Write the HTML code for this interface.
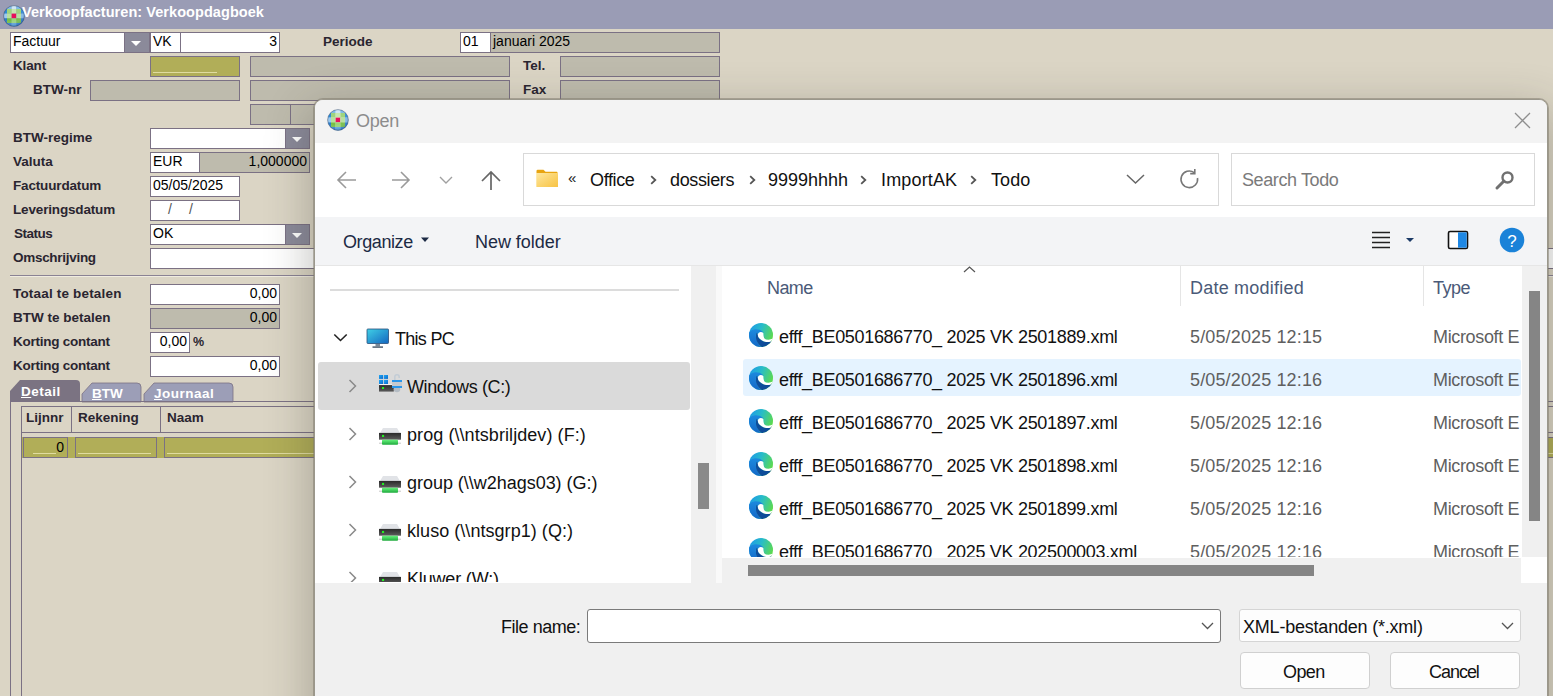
<!DOCTYPE html>
<html><head><meta charset="utf-8"><style>
*{margin:0;padding:0;box-sizing:border-box}
html,body{width:1553px;height:696px;overflow:hidden;background:#dbd5c5;font-family:"Liberation Sans",sans-serif}
.t{position:absolute;white-space:nowrap}
.b{position:absolute}
.fld{position:absolute;border:1px solid #7b7184;background:#fff}
.gr{background:#bebbad}
.ol{background:#b1ae58}
.ddb{position:absolute;background:#8b8a9a;border:1px solid #7b7184}
.ddb:after{content:"";position:absolute;left:6px;top:8px;border-left:5px solid transparent;border-right:5px solid transparent;border-top:5px solid #fff}
</style></head><body>
<div class="b" style="left:0px;top:0px;width:1553px;height:29px;background:#9a9cb5"></div>
<svg class="b" style="left:3px;top:5px" width="22" height="22" viewBox="0 0 22 22"><defs><clipPath id="cit"><circle cx="11" cy="11" r="10.4"/></clipPath><radialGradient id="rgt" cx="0.4" cy="0.3" r="0.75"><stop offset="0.55" stop-color="#fff" stop-opacity="0"/><stop offset="1" stop-color="#0a3a80" stop-opacity="0.45"/></radialGradient></defs><g clip-path="url(#cit)"><rect x="-0.75" y="-0.75" width="4.75" height="4.75" fill="#2a8ad8"/><rect x="3.95" y="-0.75" width="4.75" height="4.75" fill="#7fbcec"/><rect x="8.65" y="-0.75" width="4.75" height="4.75" fill="#cfe6f7"/><rect x="13.35" y="-0.75" width="4.75" height="4.75" fill="#7fbcec"/><rect x="18.05" y="-0.75" width="4.75" height="4.75" fill="#2a8ad8"/><rect x="-0.75" y="3.95" width="4.75" height="4.75" fill="#2a8ad8"/><rect x="3.95" y="3.95" width="4.75" height="4.75" fill="#9fd47e"/><rect x="8.65" y="3.95" width="4.75" height="4.75" fill="#c6e8b0"/><rect x="13.35" y="3.95" width="4.75" height="4.75" fill="#9fd47e"/><rect x="18.05" y="3.95" width="4.75" height="4.75" fill="#2a8ad8"/><rect x="-0.75" y="8.65" width="4.75" height="4.75" fill="#9ccaf0"/><rect x="3.95" y="8.65" width="4.75" height="4.75" fill="#b8e0a0"/><rect x="8.65" y="8.65" width="4.75" height="4.75" fill="#e8105a"/><rect x="13.35" y="8.65" width="4.75" height="4.75" fill="#b8e0a0"/><rect x="18.05" y="8.65" width="4.75" height="4.75" fill="#7fb8e8"/><rect x="-0.75" y="13.35" width="4.75" height="4.75" fill="#1f78cc"/><rect x="3.95" y="13.35" width="4.75" height="4.75" fill="#76c043"/><rect x="8.65" y="13.35" width="4.75" height="4.75" fill="#9ad47a"/><rect x="13.35" y="13.35" width="4.75" height="4.75" fill="#76c043"/><rect x="18.05" y="13.35" width="4.75" height="4.75" fill="#1f78cc"/><rect x="-0.75" y="18.05" width="4.75" height="4.75" fill="#1a62b8"/><rect x="3.95" y="18.05" width="4.75" height="4.75" fill="#2a80d0"/><rect x="8.65" y="18.05" width="4.75" height="4.75" fill="#5aa6e0"/><rect x="13.35" y="18.05" width="4.75" height="4.75" fill="#2a80d0"/><rect x="18.05" y="18.05" width="4.75" height="4.75" fill="#1a62b8"/><rect width="22" height="22" fill="url(#rgt)"/></g><circle cx="11" cy="11" r="10.4" fill="none" stroke="#2a3d5c" stroke-width="0.7" stroke-opacity="0.65"/></svg>
<div class="t" style="left:22px;top:2.98px;font-size:14.5px;line-height:18px;font-weight:bold;color:#fff;letter-spacing:0.06px">Verkoopfacturen: Verkoopdagboek</div>
<div class="fld " style="left:10px;top:32px;width:115px;height:21px"></div>
<div class="t" style="left:13px;top:32.15px;font-size:14px;line-height:18px;font-weight:normal;color:#000;">Factuur</div>
<div class="ddb" style="left:124px;top:32px;width:26px;height:21px"></div>
<div class="fld " style="left:150px;top:32px;width:31px;height:21px"></div>
<div class="t" style="left:153px;top:32.15px;font-size:14px;line-height:18px;font-weight:normal;color:#000;">VK</div>
<div class="fld " style="left:180px;top:32px;width:100px;height:21px"></div>
<div class="t" style="left:177px;width:100px;text-align:right;top:32.15px;font-size:14px;line-height:18px;font-weight:normal;color:#000;">3</div>
<div class="t" style="left:323px;top:32.82px;font-size:13.5px;line-height:17px;font-weight:bold;color:#2a2530;letter-spacing:0px">Periode</div>
<div class="fld " style="left:460px;top:32px;width:31px;height:21px"></div>
<div class="t" style="left:463px;top:32.15px;font-size:14px;line-height:18px;font-weight:normal;color:#000;">01</div>
<div class="fld gr" style="left:490px;top:32px;width:230px;height:21px"></div>
<div class="t" style="left:493px;top:32.15px;font-size:14px;line-height:18px;font-weight:normal;color:#000;">januari 2025</div>
<div class="t" style="left:13px;top:56.82px;font-size:13.5px;line-height:17px;font-weight:bold;color:#2a2530;letter-spacing:-0.15px">Klant</div>
<div class="fld ol" style="left:150px;top:56px;width:90px;height:21px"></div>
<div class="b" style="left:153px;top:72px;width:64px;height:1px;background:#e0dca0"></div>
<div class="fld gr" style="left:250px;top:56px;width:260px;height:21px"></div>
<div class="t" style="left:523px;top:56.82px;font-size:13.5px;line-height:17px;font-weight:bold;color:#2a2530;letter-spacing:0px">Tel.</div>
<div class="fld gr" style="left:560px;top:56px;width:160px;height:21px"></div>
<div class="t" style="left:33px;top:80.82px;font-size:13.5px;line-height:17px;font-weight:bold;color:#2a2530;letter-spacing:0px">BTW-nr</div>
<div class="fld gr" style="left:90px;top:80px;width:150px;height:21px"></div>
<div class="fld gr" style="left:250px;top:80px;width:260px;height:21px"></div>
<div class="t" style="left:523px;top:80.82px;font-size:13.5px;line-height:17px;font-weight:bold;color:#2a2530;letter-spacing:0px">Fax</div>
<div class="fld gr" style="left:560px;top:80px;width:160px;height:21px"></div>
<div class="fld gr" style="left:250px;top:104px;width:41px;height:21px"></div>
<div class="fld gr" style="left:290px;top:104px;width:120px;height:21px"></div>
<div class="t" style="left:13px;top:128.82px;font-size:13.5px;line-height:17px;font-weight:bold;color:#2a2530;letter-spacing:0px">BTW-regime</div>
<div class="fld " style="left:150px;top:128px;width:136px;height:21px"></div>
<div class="ddb" style="left:285px;top:128px;width:25px;height:21px"></div>
<div class="t" style="left:13px;top:152.82px;font-size:13.5px;line-height:17px;font-weight:bold;color:#2a2530;letter-spacing:0px">Valuta</div>
<div class="fld " style="left:150px;top:152px;width:50px;height:21px"></div>
<div class="t" style="left:153px;top:152.15px;font-size:14px;line-height:18px;font-weight:normal;color:#000;">EUR</div>
<div class="fld gr" style="left:199px;top:152px;width:111px;height:21px"></div>
<div class="t" style="left:196px;width:111px;text-align:right;top:152.15px;font-size:14px;line-height:18px;font-weight:normal;color:#000;">1,000000</div>
<div class="t" style="left:13px;top:176.82px;font-size:13.5px;line-height:17px;font-weight:bold;color:#2a2530;letter-spacing:-0.16px">Factuurdatum</div>
<div class="fld " style="left:150px;top:176px;width:90px;height:21px"></div>
<div class="t" style="left:153px;top:176.15px;font-size:14px;line-height:18px;font-weight:normal;color:#000;">05/05/2025</div>
<div class="t" style="left:13px;top:200.82px;font-size:13.5px;line-height:17px;font-weight:bold;color:#2a2530;letter-spacing:-0.16px">Leveringsdatum</div>
<div class="fld " style="left:150px;top:200px;width:90px;height:21px"></div>
<div class="t" style="left:168px;top:200.15px;font-size:14px;line-height:18px;font-weight:normal;color:#555;">/</div>
<div class="t" style="left:189px;top:200.15px;font-size:14px;line-height:18px;font-weight:normal;color:#555;">/</div>
<div class="t" style="left:14px;top:224.82px;font-size:13.5px;line-height:17px;font-weight:bold;color:#2a2530;letter-spacing:-0.5px">Status</div>
<div class="fld " style="left:150px;top:224px;width:136px;height:21px"></div>
<div class="t" style="left:153px;top:224.15px;font-size:14px;line-height:18px;font-weight:normal;color:#000;">OK</div>
<div class="ddb" style="left:285px;top:224px;width:25px;height:21px"></div>
<div class="t" style="left:13px;top:248.82px;font-size:13.5px;line-height:17px;font-weight:bold;color:#2a2530;letter-spacing:-0.29px">Omschrijving</div>
<div class="fld " style="left:150px;top:248px;width:1500px;height:21px"></div>
<div class="b" style="left:10px;top:275px;width:1600px;height:2px;background:#8a8294;border-bottom:1px solid #f0ece0"></div>
<div class="t" style="left:13px;top:284.82px;font-size:13.5px;line-height:17px;font-weight:bold;color:#2a2530;letter-spacing:0.18px">Totaal te betalen</div>
<div class="fld " style="left:150px;top:284px;width:130px;height:21px"></div>
<div class="t" style="left:147px;width:130px;text-align:right;top:284.15px;font-size:14px;line-height:18px;font-weight:normal;color:#000;">0,00</div>
<div class="t" style="left:13px;top:308.82px;font-size:13.5px;line-height:17px;font-weight:bold;color:#2a2530;letter-spacing:0px">BTW te betalen</div>
<div class="fld gr" style="left:150px;top:308px;width:130px;height:21px"></div>
<div class="t" style="left:147px;width:130px;text-align:right;top:308.15px;font-size:14px;line-height:18px;font-weight:normal;color:#000;">0,00</div>
<div class="t" style="left:13px;top:332.82px;font-size:13.5px;line-height:17px;font-weight:bold;color:#2a2530;letter-spacing:-0.25px">Korting contant</div>
<div class="fld " style="left:150px;top:332px;width:40px;height:21px"></div>
<div class="t" style="left:147px;width:40px;text-align:right;top:332.15px;font-size:14px;line-height:18px;font-weight:normal;color:#000;">0,00</div>
<div class="t" style="left:193px;top:333.67px;font-size:12.5px;line-height:16px;font-weight:bold;color:#2a2530;">%</div>
<div class="t" style="left:13px;top:356.82px;font-size:13.5px;line-height:17px;font-weight:bold;color:#2a2530;letter-spacing:-0.25px">Korting contant</div>
<div class="fld " style="left:150px;top:356px;width:130px;height:21px"></div>
<div class="t" style="left:147px;width:130px;text-align:right;top:356.15px;font-size:14px;line-height:18px;font-weight:normal;color:#000;">0,00</div>
<svg class="b" style="left:0;top:376px" width="320" height="30"><path d="M10 25 L10 15 L20 4 L76 4 Q80 4 80 8 L80 25 Z" fill="#7b7382"/><path d="M82 26 L82 18 L92 7 L137 7 Q141 7 141 11 L141 26 Z" fill="#9c9eb7" stroke="#7b7184" stroke-width="0.8"/><path d="M144 26 L144 18 L154 7 L229 7 Q233 7 233 11 L233 26 Z" fill="#9c9eb7" stroke="#7b7184" stroke-width="0.8"/></svg>
<div class="t" style="left:21px;top:382.82px;font-size:13.5px;line-height:17px;font-weight:bold;color:#fff;letter-spacing:0.5px"><u>D</u>etail</div>
<div class="t" style="left:92px;top:384.82px;font-size:13.5px;line-height:17px;font-weight:bold;color:#fff;"><u>B</u>TW</div>
<div class="t" style="left:154px;top:384.82px;font-size:13.5px;line-height:17px;font-weight:bold;color:#fff;letter-spacing:0.5px"><u>J</u>ournaal</div>
<div class="b" style="left:10px;top:401px;width:1600px;height:1px;background:#7b7184"></div>
<div class="b" style="left:10px;top:401px;width:1px;height:300px;background:#7b7184"></div>
<div class="b" style="left:21px;top:406px;width:1600px;height:1px;background:#7b7184"></div>
<div class="b" style="left:21px;top:406px;width:1px;height:300px;background:#7b7184"></div>
<div class="b" style="left:21px;top:432px;width:1600px;height:1px;background:#7b7184"></div>
<div class="b" style="left:71px;top:406px;width:1px;height:27px;background:#7b7184"></div>
<div class="b" style="left:160px;top:406px;width:1px;height:27px;background:#7b7184"></div>
<div class="t" style="left:26px;top:408.82px;font-size:13.5px;line-height:17px;font-weight:bold;color:#2a2530;">Lijnnr</div>
<div class="t" style="left:78px;top:408.82px;font-size:13.5px;line-height:17px;font-weight:bold;color:#2a2530;">Rekening</div>
<div class="t" style="left:167px;top:408.82px;font-size:13.5px;line-height:17px;font-weight:bold;color:#2a2530;">Naam</div>
<div class="b" style="left:22px;top:437px;width:1600px;height:21px;background:#b1ae58"></div>
<div class="fld ol" style="left:23px;top:437px;width:45px;height:21px"></div>
<div class="t" style="left:24px;width:40px;text-align:right;top:438.15px;font-size:14px;line-height:18px;font-weight:normal;color:#000;">0</div>
<div class="b" style="left:33px;top:453px;width:23px;height:1px;background:#e0dca0"></div>
<div class="fld ol" style="left:75px;top:437px;width:82px;height:21px"></div>
<div class="b" style="left:78px;top:453px;width:73px;height:1px;background:#e0dca0"></div>
<div class="fld ol" style="left:164px;top:437px;width:1500px;height:21px"></div>
<div class="b" style="left:167px;top:453px;width:1400px;height:1px;background:#e0dca0"></div>
<div class="b" style="left:314px;top:99px;width:1234px;height:640px;border:1px solid #9a978b;border-radius:9px 9px 0 0;background:#f0f0f0;box-shadow:0 0 0 1px rgba(125,120,105,0.5), 0 14px 46px 3px rgba(45,48,38,0.30);overflow:hidden"></div>
<div class="b" style="left:315px;top:100px;width:1232px;height:43px;background:#f3f3f3;border-radius:8px 8px 0 0"></div>
<svg class="b" style="left:327px;top:109px" width="22" height="22" viewBox="0 0 22 22"><defs><clipPath id="cid"><circle cx="11" cy="11" r="10.4"/></clipPath><radialGradient id="rgd" cx="0.4" cy="0.3" r="0.75"><stop offset="0.55" stop-color="#fff" stop-opacity="0"/><stop offset="1" stop-color="#0a3a80" stop-opacity="0.45"/></radialGradient></defs><g clip-path="url(#cid)"><rect x="-0.75" y="-0.75" width="4.75" height="4.75" fill="#2a8ad8"/><rect x="3.95" y="-0.75" width="4.75" height="4.75" fill="#7fbcec"/><rect x="8.65" y="-0.75" width="4.75" height="4.75" fill="#cfe6f7"/><rect x="13.35" y="-0.75" width="4.75" height="4.75" fill="#7fbcec"/><rect x="18.05" y="-0.75" width="4.75" height="4.75" fill="#2a8ad8"/><rect x="-0.75" y="3.95" width="4.75" height="4.75" fill="#2a8ad8"/><rect x="3.95" y="3.95" width="4.75" height="4.75" fill="#9fd47e"/><rect x="8.65" y="3.95" width="4.75" height="4.75" fill="#c6e8b0"/><rect x="13.35" y="3.95" width="4.75" height="4.75" fill="#9fd47e"/><rect x="18.05" y="3.95" width="4.75" height="4.75" fill="#2a8ad8"/><rect x="-0.75" y="8.65" width="4.75" height="4.75" fill="#9ccaf0"/><rect x="3.95" y="8.65" width="4.75" height="4.75" fill="#b8e0a0"/><rect x="8.65" y="8.65" width="4.75" height="4.75" fill="#e8105a"/><rect x="13.35" y="8.65" width="4.75" height="4.75" fill="#b8e0a0"/><rect x="18.05" y="8.65" width="4.75" height="4.75" fill="#7fb8e8"/><rect x="-0.75" y="13.35" width="4.75" height="4.75" fill="#1f78cc"/><rect x="3.95" y="13.35" width="4.75" height="4.75" fill="#76c043"/><rect x="8.65" y="13.35" width="4.75" height="4.75" fill="#9ad47a"/><rect x="13.35" y="13.35" width="4.75" height="4.75" fill="#76c043"/><rect x="18.05" y="13.35" width="4.75" height="4.75" fill="#1f78cc"/><rect x="-0.75" y="18.05" width="4.75" height="4.75" fill="#1a62b8"/><rect x="3.95" y="18.05" width="4.75" height="4.75" fill="#2a80d0"/><rect x="8.65" y="18.05" width="4.75" height="4.75" fill="#5aa6e0"/><rect x="13.35" y="18.05" width="4.75" height="4.75" fill="#2a80d0"/><rect x="18.05" y="18.05" width="4.75" height="4.75" fill="#1a62b8"/><rect width="22" height="22" fill="url(#rgd)"/></g><circle cx="11" cy="11" r="10.4" fill="none" stroke="#2a3d5c" stroke-width="0.7" stroke-opacity="0.65"/></svg>
<div class="t" style="left:356px;top:110.06px;font-size:18px;line-height:22px;font-weight:normal;color:#8c8c8c;;letter-spacing:-0.271px">Open</div>
<svg class="b" style="left:1510px;top:108px" width="25" height="25"><path d="M5 5 L20 20 M20 5 L5 20" stroke="#8e8e8e" stroke-width="1.25"/></svg>
<div class="b" style="left:315px;top:143px;width:1232px;height:74px;background:#fff"></div>
<svg class="b" style="left:330px;top:165px" width="180" height="32"><path d="M9 15 L26 15 M16 7 L8 15 L16 23" fill="none" stroke="#9a9a9a" stroke-width="1.6"/><path d="M62 15 L79 15 M71 7 L79 15 L71 23" fill="none" stroke="#9a9a9a" stroke-width="1.6"/><path d="M110 12 L116 18 L122 12" fill="none" stroke="#a0a0a0" stroke-width="1.4"/><path d="M161 25 L161 7 M152 16 L161 7 L170 16" fill="none" stroke="#666" stroke-width="1.7"/></svg>
<div class="b" style="left:523px;top:153px;width:696px;height:53px;border:1px solid #d9d9d9;background:#fff"></div>
<svg class="b" style="left:536px;top:169px" width="24" height="20"><path d="M0.5 2 Q0.5 0.8 1.7 0.8 L7.5 0.8 L9.5 2.8 L20.8 2.8 Q21.5 2.8 21.5 3.5 L21.5 4 L0.5 4 Z" fill="#e8a410"/><rect x="0.5" y="4" width="21.5" height="14" rx="0.6" fill="#fcd56a"/><rect x="0.5" y="4" width="21.5" height="14" fill="url(#fg)"/><defs><linearGradient id="fg" x1="0" y1="0" x2="1" y2="1"><stop offset="0" stop-color="#fff0b8" stop-opacity="0.7"/><stop offset="1" stop-color="#f5b82c" stop-opacity="0.6"/></linearGradient></defs></svg>
<div class="t" style="left:568px;top:168.30px;font-size:15px;line-height:19px;font-weight:normal;color:#222;">&#171;</div>
<div class="t" style="left:590px;top:168.76px;font-size:18px;line-height:22px;font-weight:normal;color:#111;;letter-spacing:-0.363px">Office</div>
<div class="t" style="left:670px;top:168.76px;font-size:18px;line-height:22px;font-weight:normal;color:#111;;letter-spacing:-0.372px">dossiers</div>
<div class="t" style="left:768px;top:168.76px;font-size:18px;line-height:22px;font-weight:normal;color:#111;;letter-spacing:-0.015px">9999hhhh</div>
<div class="t" style="left:881px;top:168.76px;font-size:18px;line-height:22px;font-weight:normal;color:#111;;letter-spacing:0.153px">ImportAK</div>
<div class="t" style="left:991px;top:168.76px;font-size:18px;line-height:22px;font-weight:normal;color:#111;;letter-spacing:0.094px">Todo</div>
<svg class="b" style="left:649px;top:173px" width="10" height="14"><path d="M2.2 3.2 L6.3 7 L2.2 10.8" fill="none" stroke="#555" stroke-width="1.8"/></svg>
<svg class="b" style="left:748px;top:173px" width="10" height="14"><path d="M2.2 3.2 L6.3 7 L2.2 10.8" fill="none" stroke="#555" stroke-width="1.8"/></svg>
<svg class="b" style="left:859px;top:173px" width="10" height="14"><path d="M2.2 3.2 L6.3 7 L2.2 10.8" fill="none" stroke="#555" stroke-width="1.8"/></svg>
<svg class="b" style="left:969px;top:173px" width="10" height="14"><path d="M2.2 3.2 L6.3 7 L2.2 10.8" fill="none" stroke="#555" stroke-width="1.8"/></svg>
<svg class="b" style="left:1124px;top:170px" width="24" height="18"><path d="M3 5 L11.5 13 L20 5" fill="none" stroke="#666" stroke-width="1.5"/></svg>
<svg class="b" style="left:1176px;top:166px" width="28" height="28"><path d="M21.5 12 A8.3 8.3 0 1 1 18.2 6.6" fill="none" stroke="#777" stroke-width="1.6"/><path d="M18.8 3 L18.8 7.6 L14.2 7.6" fill="none" stroke="#777" stroke-width="1.6"/></svg>
<div class="b" style="left:1231px;top:153px;width:304px;height:53px;border:1px solid #d9d9d9;background:#fff"></div>
<div class="t" style="left:1242px;top:168.76px;font-size:18px;line-height:22px;font-weight:normal;color:#7a7a7a;;letter-spacing:-0.392px">Search Todo</div>
<svg class="b" style="left:1492px;top:168px" width="26" height="26"><circle cx="15.5" cy="9.5" r="5" fill="none" stroke="#707070" stroke-width="2.4"/><path d="M12 13 L5 20" stroke="#707070" stroke-width="3" stroke-linecap="round"/></svg>
<div class="b" style="left:315px;top:217px;width:1232px;height:48px;background:#f3f4f6"></div>
<div class="b" style="left:315px;top:265px;width:1232px;height:1px;background:#e6e6e6"></div>
<div class="t" style="left:343px;top:230.76px;font-size:18px;line-height:22px;font-weight:normal;color:#1c2a44;;letter-spacing:-0.406px">Organize</div>
<svg class="b" style="left:420px;top:236px" width="12" height="8"><path d="M1 1.5 L9 1.5 L5 6 Z" fill="#1c2a44"/></svg>
<div class="t" style="left:475px;top:230.76px;font-size:18px;line-height:22px;font-weight:normal;color:#1c2a44;;letter-spacing:-0.042px">New folder</div>
<svg class="b" style="left:1368px;top:228px" width="60" height="26"><path d="M4 4.5 H22 M4 9.5 H22 M4 14.5 H22 M4 19.5 H22" stroke="#222" stroke-width="1.3"/><path d="M38 10 L46 10 L42 14 Z" fill="#1c3a66"/></svg>
<svg class="b" style="left:1446px;top:229px" width="24" height="22"><rect x="2.5" y="2.5" width="19" height="17" rx="1.5" fill="#fff" stroke="#111" stroke-width="1.6"/><rect x="12" y="3.3" width="8.7" height="15.4" fill="#1e88e5"/></svg>
<svg class="b" style="left:1499px;top:227px" width="26" height="26"><circle cx="13" cy="13" r="12.3" fill="#1a82d8"/><text x="13" y="19.5" text-anchor="middle" font-family="Liberation Sans" font-size="17" fill="#fff">?</text></svg>
<div class="b" style="left:315px;top:266px;width:376px;height:317px;background:#fff"></div>
<div class="b" style="left:691px;top:266px;width:25px;height:317px;background:#f0f0f0"></div>
<div class="b" style="left:716px;top:266px;width:6px;height:317px;background:#f9f9f9"></div>
<div class="b" style="left:722px;top:266px;width:800px;height:292px;background:#fff"></div>
<div class="b" style="left:1522px;top:266px;width:25px;height:292px;background:#f0f0f0"></div>
<div class="b" style="left:1521px;top:557px;width:26px;height:26px;background:#fff"></div>
<div class="b" style="left:722px;top:558px;width:799px;height:25px;background:#f0f0f0"></div>
<div class="b" style="left:748px;top:565px;width:566px;height:11px;background:#858585"></div>
<div class="b" style="left:1529px;top:291px;width:11px;height:230px;background:#858585"></div>
<div class="b" style="left:698px;top:463px;width:11px;height:46px;background:#8a8a8a"></div>
<div class="b" style="left:0;top:0;width:1553px;height:696px;clip-path:polygon(315px 266px,691px 266px,691px 582px,315px 582px)"><div class="b" style="left:330px;top:289px;width:349px;height:2px;background:#dcdcdc"></div>
<svg class="b" style="left:330px;top:330px" width="22" height="16"><path d="M4.3 4.5 L10.5 10.5 L16.7 4.5" fill="none" stroke="#222" stroke-width="1.6"/></svg>
<svg class="b" style="left:366px;top:328px" width="24" height="22"><defs><linearGradient id="mg" x1="0" y1="0" x2="1" y2="1"><stop offset="0" stop-color="#3fd0e6"/><stop offset="1" stop-color="#1466c0"/></linearGradient></defs><rect x="1" y="1" width="21.5" height="14.5" rx="0.8" fill="url(#mg)" stroke="#2a4f7a" stroke-width="0.8"/><rect x="9.5" y="16" width="4.5" height="2.5" fill="#7a8a9a"/><rect x="6.5" y="18.3" width="10.5" height="1.6" fill="#5a6a7a"/></svg>
<div class="t" style="left:395px;top:327.76px;font-size:18px;line-height:22px;font-weight:normal;color:#111;;letter-spacing:-0.715px">This PC</div>
<div class="b" style="left:318px;top:362px;width:372px;height:48px;background:#dadada;border-radius:3px"></div>
<svg class="b" style="left:344px;top:376px" width="16" height="20"><path d="M5.5 4 L11.5 10 L5.5 16" fill="none" stroke="#8a8a8a" stroke-width="1.5"/></svg>
<svg class="b" style="left:374px;top:370px" width="30" height="24" viewBox="0 0 30 24"><defs><linearGradient id="wg" x1="0" y1="0" x2="1" y2="1"><stop offset="0" stop-color="#22a8f4"/><stop offset="1" stop-color="#0868cc"/></linearGradient><linearGradient id="dg" x1="0" y1="0" x2="0" y2="1"><stop offset="0" stop-color="#2a2a2a"/><stop offset="1" stop-color="#5a5a5a"/></linearGradient></defs><rect x="5" y="5" width="4.1" height="3.9" fill="url(#wg)"/><rect x="9.9" y="5" width="4.1" height="3.9" fill="url(#wg)"/><rect x="5" y="9.9" width="4.1" height="4.1" fill="url(#wg)"/><rect x="9.9" y="9.9" width="4.1" height="4.1" fill="url(#wg)"/><rect x="5" y="14" width="14" height="1.2" fill="#f2f2f2"/><rect x="5" y="15.1" width="14.8" height="6.5" fill="url(#dg)"/><rect x="8" y="17" width="2.1" height="2" fill="#22ee22"/><path d="M20.8 10 L20.8 7 Q20.8 4.8 23 4.8 Q25.2 4.8 25.2 7 L25.2 8" fill="none" stroke="#c2ccd6" stroke-width="1.5"/><ellipse cx="23" cy="19.5" rx="3.2" ry="2.8" fill="#b4bcc4"/><rect x="18" y="10" width="10" height="8" fill="#c6cacf"/><rect x="18" y="10" width="10" height="2" fill="#2a96ea"/><rect x="18" y="16" width="10" height="2" fill="#2a96ea"/></svg>
<div class="t" style="left:407px;top:375.76px;font-size:18px;line-height:22px;font-weight:normal;color:#111;;letter-spacing:-0.382px">Windows (C:)</div>
<svg class="b" style="left:344px;top:424px" width="16" height="20"><path d="M5.5 4 L11.5 10 L5.5 16" fill="none" stroke="#8a8a8a" stroke-width="1.5"/></svg>
<svg class="b" style="left:379px;top:428px" width="22" height="17" viewBox="0 0 22 17"><defs><linearGradient id="dg1" x1="0" y1="0" x2="0" y2="1"><stop offset="0" stop-color="#2a2a2a"/><stop offset="1" stop-color="#5c5c5c"/></linearGradient><linearGradient id="gg1" x1="0" y1="0" x2="0" y2="1"><stop offset="0" stop-color="#66f27c"/><stop offset="1" stop-color="#1ea83c"/></linearGradient></defs><path d="M4 0 L18 0 L21 5 L1 5 Z" fill="#e1e3e7"/><rect x="0" y="4.9" width="22" height="6.8" fill="url(#dg1)"/><rect x="3" y="6.9" width="2.1" height="2.1" fill="#22ee22"/><rect x="0" y="14.6" width="22" height="1.3" fill="#d4d4d4"/><rect x="3" y="11.8" width="16" height="5" rx="0.8" fill="url(#gg1)"/></svg>
<div class="t" style="left:407px;top:423.76px;font-size:18px;line-height:22px;font-weight:normal;color:#111;;letter-spacing:0.073px">prog (\\ntsbriljdev) (F:)</div>
<svg class="b" style="left:344px;top:472px" width="16" height="20"><path d="M5.5 4 L11.5 10 L5.5 16" fill="none" stroke="#8a8a8a" stroke-width="1.5"/></svg>
<svg class="b" style="left:379px;top:476px" width="22" height="17" viewBox="0 0 22 17"><defs><linearGradient id="dg2" x1="0" y1="0" x2="0" y2="1"><stop offset="0" stop-color="#2a2a2a"/><stop offset="1" stop-color="#5c5c5c"/></linearGradient><linearGradient id="gg2" x1="0" y1="0" x2="0" y2="1"><stop offset="0" stop-color="#66f27c"/><stop offset="1" stop-color="#1ea83c"/></linearGradient></defs><path d="M4 0 L18 0 L21 5 L1 5 Z" fill="#e1e3e7"/><rect x="0" y="4.9" width="22" height="6.8" fill="url(#dg2)"/><rect x="3" y="6.9" width="2.1" height="2.1" fill="#22ee22"/><rect x="0" y="14.6" width="22" height="1.3" fill="#d4d4d4"/><rect x="3" y="11.8" width="16" height="5" rx="0.8" fill="url(#gg2)"/></svg>
<div class="t" style="left:407px;top:471.76px;font-size:18px;line-height:22px;font-weight:normal;color:#111;;letter-spacing:-0.028px">group (\\w2hags03) (G:)</div>
<svg class="b" style="left:344px;top:520px" width="16" height="20"><path d="M5.5 4 L11.5 10 L5.5 16" fill="none" stroke="#8a8a8a" stroke-width="1.5"/></svg>
<svg class="b" style="left:379px;top:524px" width="22" height="17" viewBox="0 0 22 17"><defs><linearGradient id="dg3" x1="0" y1="0" x2="0" y2="1"><stop offset="0" stop-color="#2a2a2a"/><stop offset="1" stop-color="#5c5c5c"/></linearGradient><linearGradient id="gg3" x1="0" y1="0" x2="0" y2="1"><stop offset="0" stop-color="#66f27c"/><stop offset="1" stop-color="#1ea83c"/></linearGradient></defs><path d="M4 0 L18 0 L21 5 L1 5 Z" fill="#e1e3e7"/><rect x="0" y="4.9" width="22" height="6.8" fill="url(#dg3)"/><rect x="3" y="6.9" width="2.1" height="2.1" fill="#22ee22"/><rect x="0" y="14.6" width="22" height="1.3" fill="#d4d4d4"/><rect x="3" y="11.8" width="16" height="5" rx="0.8" fill="url(#gg3)"/></svg>
<div class="t" style="left:407px;top:519.76px;font-size:18px;line-height:22px;font-weight:normal;color:#111;;letter-spacing:0.044px">kluso (\\ntsgrp1) (Q:)</div>
<svg class="b" style="left:344px;top:568px" width="16" height="20"><path d="M5.5 4 L11.5 10 L5.5 16" fill="none" stroke="#8a8a8a" stroke-width="1.5"/></svg>
<svg class="b" style="left:379px;top:572px" width="22" height="17" viewBox="0 0 22 17"><defs><linearGradient id="dg4" x1="0" y1="0" x2="0" y2="1"><stop offset="0" stop-color="#2a2a2a"/><stop offset="1" stop-color="#5c5c5c"/></linearGradient><linearGradient id="gg4" x1="0" y1="0" x2="0" y2="1"><stop offset="0" stop-color="#66f27c"/><stop offset="1" stop-color="#1ea83c"/></linearGradient></defs><path d="M4 0 L18 0 L21 5 L1 5 Z" fill="#e1e3e7"/><rect x="0" y="4.9" width="22" height="6.8" fill="url(#dg4)"/><rect x="3" y="6.9" width="2.1" height="2.1" fill="#22ee22"/><rect x="0" y="14.6" width="22" height="1.3" fill="#d4d4d4"/><rect x="3" y="11.8" width="16" height="5" rx="0.8" fill="url(#gg4)"/></svg>
<div class="t" style="left:407px;top:567.76px;font-size:18px;line-height:22px;font-weight:normal;color:#111;;letter-spacing:-0.164px">Kluwer (W:)</div>
</div><div class="b" style="left:0;top:0;width:1553px;height:696px;clip-path:polygon(722px 266px,1521px 266px,1521px 557px,722px 557px)"><svg class="b" style="left:962px;top:264px" width="16" height="10"><path d="M2 8 L7.5 3 L13 8" fill="none" stroke="#555" stroke-width="1.2"/></svg>
<div class="t" style="left:767px;top:276.76px;font-size:18px;line-height:22px;font-weight:normal;color:#4a5a78;;letter-spacing:-0.622px">Name</div>
<div class="b" style="left:1180px;top:266px;width:1px;height:40px;background:#e5e5e5"></div>
<div class="t" style="left:1190px;top:276.76px;font-size:18px;line-height:22px;font-weight:normal;color:#4a5a78;;letter-spacing:0.220px">Date modified</div>
<div class="b" style="left:1423px;top:266px;width:1px;height:40px;background:#e5e5e5"></div>
<div class="t" style="left:1433px;top:276.76px;font-size:18px;line-height:22px;font-weight:normal;color:#4a5a78;;letter-spacing:-0.506px">Type</div>
<div class="b" style="left:743px;top:359px;width:778px;height:37px;background:#e5f3ff;border-radius:3px"></div>
<svg width="0" height="0" style="position:absolute"><defs><linearGradient id="eTop" x1="0" y1="0.2" x2="1" y2="0.6"><stop offset="0" stop-color="#1e9ae8"/><stop offset="0.45" stop-color="#28bcc8"/><stop offset="1" stop-color="#60dc48"/></linearGradient><linearGradient id="eMid" x1="0" y1="0" x2="0" y2="1"><stop offset="0" stop-color="#1c8ade"/><stop offset="1" stop-color="#1466c6"/></linearGradient><linearGradient id="eDark" x1="0" y1="0" x2="1" y2="1"><stop offset="0" stop-color="#0e4e9e"/><stop offset="1" stop-color="#0d4a96"/></linearGradient><clipPath id="eClip"><circle cx="12" cy="12" r="12"/></clipPath></defs></svg><svg class="b" style="left:749px;top:323px" width="24" height="24" viewBox="0 0 24 24"><g clip-path="url(#eClip)"><rect width="24" height="24" fill="url(#eTop)"/><path d="M-1 10.5 Q1.5 6.6 6 6.2 Q11 5.9 13.6 8.4 L14.4 10.1 L13 9.3 L10.1 9.3 L8.8 11 L7.5 9.7 Q6.5 12 6.9 14.6 Q7.5 19.5 11 23 Q12.5 24 15 24.5 L-1 25 Z" fill="url(#eMid)"/><path d="M7.5 9.7 L8.8 11 Q8.5 13.6 10.6 15.7 Q13 17.8 16.2 18.8 Q19.5 19.4 23 17.8 L25 20 L14.8 25 Q11 23.5 8.6 19.8 Q6.6 16.5 6.9 13.5 Q7 11 7.5 9.7 Z" fill="url(#eDark)"/><path d="M8.8 11.2 Q9.5 9.3 11.5 9.1 Q13.5 9.1 14.4 10.3 Q14.3 13.6 15.2 15.2 Q16.8 16.8 19.5 16.7 Q22 16.6 23.8 15.6 Q23 17.6 21.8 18.4 Q19.5 19.3 16.2 18.8 Q13 17.9 10.8 15.8 Q8.6 13.8 8.8 11.2 Z" fill="#fff"/></g></svg>
<div class="t" style="left:779px;top:325.76px;font-size:18px;line-height:22px;font-weight:normal;color:#111;;letter-spacing:-0.319px">efff_BE0501686770_ 2025 VK 2501889.xml</div>
<div class="t" style="left:1190px;top:325.76px;font-size:18px;line-height:22px;font-weight:normal;color:#5f5f5f;;letter-spacing:0.139px">5/05/2025 12:15</div>
<div class="t" style="left:1433px;top:325.76px;font-size:18px;line-height:22px;font-weight:normal;color:#5f5f5f;;letter-spacing:-0.350px">Microsoft E</div>
<svg class="b" style="left:749px;top:366px" width="24" height="24" viewBox="0 0 24 24"><g clip-path="url(#eClip)"><rect width="24" height="24" fill="url(#eTop)"/><path d="M-1 10.5 Q1.5 6.6 6 6.2 Q11 5.9 13.6 8.4 L14.4 10.1 L13 9.3 L10.1 9.3 L8.8 11 L7.5 9.7 Q6.5 12 6.9 14.6 Q7.5 19.5 11 23 Q12.5 24 15 24.5 L-1 25 Z" fill="url(#eMid)"/><path d="M7.5 9.7 L8.8 11 Q8.5 13.6 10.6 15.7 Q13 17.8 16.2 18.8 Q19.5 19.4 23 17.8 L25 20 L14.8 25 Q11 23.5 8.6 19.8 Q6.6 16.5 6.9 13.5 Q7 11 7.5 9.7 Z" fill="url(#eDark)"/><path d="M8.8 11.2 Q9.5 9.3 11.5 9.1 Q13.5 9.1 14.4 10.3 Q14.3 13.6 15.2 15.2 Q16.8 16.8 19.5 16.7 Q22 16.6 23.8 15.6 Q23 17.6 21.8 18.4 Q19.5 19.3 16.2 18.8 Q13 17.9 10.8 15.8 Q8.6 13.8 8.8 11.2 Z" fill="#fff"/></g></svg>
<div class="t" style="left:779px;top:368.76px;font-size:18px;line-height:22px;font-weight:normal;color:#111;;letter-spacing:-0.319px">efff_BE0501686770_ 2025 VK 2501896.xml</div>
<div class="t" style="left:1190px;top:368.76px;font-size:18px;line-height:22px;font-weight:normal;color:#5f5f5f;;letter-spacing:0.139px">5/05/2025 12:16</div>
<div class="t" style="left:1433px;top:368.76px;font-size:18px;line-height:22px;font-weight:normal;color:#5f5f5f;;letter-spacing:-0.350px">Microsoft E</div>
<svg class="b" style="left:749px;top:409px" width="24" height="24" viewBox="0 0 24 24"><g clip-path="url(#eClip)"><rect width="24" height="24" fill="url(#eTop)"/><path d="M-1 10.5 Q1.5 6.6 6 6.2 Q11 5.9 13.6 8.4 L14.4 10.1 L13 9.3 L10.1 9.3 L8.8 11 L7.5 9.7 Q6.5 12 6.9 14.6 Q7.5 19.5 11 23 Q12.5 24 15 24.5 L-1 25 Z" fill="url(#eMid)"/><path d="M7.5 9.7 L8.8 11 Q8.5 13.6 10.6 15.7 Q13 17.8 16.2 18.8 Q19.5 19.4 23 17.8 L25 20 L14.8 25 Q11 23.5 8.6 19.8 Q6.6 16.5 6.9 13.5 Q7 11 7.5 9.7 Z" fill="url(#eDark)"/><path d="M8.8 11.2 Q9.5 9.3 11.5 9.1 Q13.5 9.1 14.4 10.3 Q14.3 13.6 15.2 15.2 Q16.8 16.8 19.5 16.7 Q22 16.6 23.8 15.6 Q23 17.6 21.8 18.4 Q19.5 19.3 16.2 18.8 Q13 17.9 10.8 15.8 Q8.6 13.8 8.8 11.2 Z" fill="#fff"/></g></svg>
<div class="t" style="left:779px;top:411.76px;font-size:18px;line-height:22px;font-weight:normal;color:#111;;letter-spacing:-0.319px">efff_BE0501686770_ 2025 VK 2501897.xml</div>
<div class="t" style="left:1190px;top:411.76px;font-size:18px;line-height:22px;font-weight:normal;color:#5f5f5f;;letter-spacing:0.139px">5/05/2025 12:16</div>
<div class="t" style="left:1433px;top:411.76px;font-size:18px;line-height:22px;font-weight:normal;color:#5f5f5f;;letter-spacing:-0.350px">Microsoft E</div>
<svg class="b" style="left:749px;top:452px" width="24" height="24" viewBox="0 0 24 24"><g clip-path="url(#eClip)"><rect width="24" height="24" fill="url(#eTop)"/><path d="M-1 10.5 Q1.5 6.6 6 6.2 Q11 5.9 13.6 8.4 L14.4 10.1 L13 9.3 L10.1 9.3 L8.8 11 L7.5 9.7 Q6.5 12 6.9 14.6 Q7.5 19.5 11 23 Q12.5 24 15 24.5 L-1 25 Z" fill="url(#eMid)"/><path d="M7.5 9.7 L8.8 11 Q8.5 13.6 10.6 15.7 Q13 17.8 16.2 18.8 Q19.5 19.4 23 17.8 L25 20 L14.8 25 Q11 23.5 8.6 19.8 Q6.6 16.5 6.9 13.5 Q7 11 7.5 9.7 Z" fill="url(#eDark)"/><path d="M8.8 11.2 Q9.5 9.3 11.5 9.1 Q13.5 9.1 14.4 10.3 Q14.3 13.6 15.2 15.2 Q16.8 16.8 19.5 16.7 Q22 16.6 23.8 15.6 Q23 17.6 21.8 18.4 Q19.5 19.3 16.2 18.8 Q13 17.9 10.8 15.8 Q8.6 13.8 8.8 11.2 Z" fill="#fff"/></g></svg>
<div class="t" style="left:779px;top:454.76px;font-size:18px;line-height:22px;font-weight:normal;color:#111;;letter-spacing:-0.319px">efff_BE0501686770_ 2025 VK 2501898.xml</div>
<div class="t" style="left:1190px;top:454.76px;font-size:18px;line-height:22px;font-weight:normal;color:#5f5f5f;;letter-spacing:0.139px">5/05/2025 12:16</div>
<div class="t" style="left:1433px;top:454.76px;font-size:18px;line-height:22px;font-weight:normal;color:#5f5f5f;;letter-spacing:-0.350px">Microsoft E</div>
<svg class="b" style="left:749px;top:495px" width="24" height="24" viewBox="0 0 24 24"><g clip-path="url(#eClip)"><rect width="24" height="24" fill="url(#eTop)"/><path d="M-1 10.5 Q1.5 6.6 6 6.2 Q11 5.9 13.6 8.4 L14.4 10.1 L13 9.3 L10.1 9.3 L8.8 11 L7.5 9.7 Q6.5 12 6.9 14.6 Q7.5 19.5 11 23 Q12.5 24 15 24.5 L-1 25 Z" fill="url(#eMid)"/><path d="M7.5 9.7 L8.8 11 Q8.5 13.6 10.6 15.7 Q13 17.8 16.2 18.8 Q19.5 19.4 23 17.8 L25 20 L14.8 25 Q11 23.5 8.6 19.8 Q6.6 16.5 6.9 13.5 Q7 11 7.5 9.7 Z" fill="url(#eDark)"/><path d="M8.8 11.2 Q9.5 9.3 11.5 9.1 Q13.5 9.1 14.4 10.3 Q14.3 13.6 15.2 15.2 Q16.8 16.8 19.5 16.7 Q22 16.6 23.8 15.6 Q23 17.6 21.8 18.4 Q19.5 19.3 16.2 18.8 Q13 17.9 10.8 15.8 Q8.6 13.8 8.8 11.2 Z" fill="#fff"/></g></svg>
<div class="t" style="left:779px;top:497.76px;font-size:18px;line-height:22px;font-weight:normal;color:#111;;letter-spacing:-0.319px">efff_BE0501686770_ 2025 VK 2501899.xml</div>
<div class="t" style="left:1190px;top:497.76px;font-size:18px;line-height:22px;font-weight:normal;color:#5f5f5f;;letter-spacing:0.139px">5/05/2025 12:16</div>
<div class="t" style="left:1433px;top:497.76px;font-size:18px;line-height:22px;font-weight:normal;color:#5f5f5f;;letter-spacing:-0.350px">Microsoft E</div>
<svg class="b" style="left:749px;top:538px" width="24" height="24" viewBox="0 0 24 24"><g clip-path="url(#eClip)"><rect width="24" height="24" fill="url(#eTop)"/><path d="M-1 10.5 Q1.5 6.6 6 6.2 Q11 5.9 13.6 8.4 L14.4 10.1 L13 9.3 L10.1 9.3 L8.8 11 L7.5 9.7 Q6.5 12 6.9 14.6 Q7.5 19.5 11 23 Q12.5 24 15 24.5 L-1 25 Z" fill="url(#eMid)"/><path d="M7.5 9.7 L8.8 11 Q8.5 13.6 10.6 15.7 Q13 17.8 16.2 18.8 Q19.5 19.4 23 17.8 L25 20 L14.8 25 Q11 23.5 8.6 19.8 Q6.6 16.5 6.9 13.5 Q7 11 7.5 9.7 Z" fill="url(#eDark)"/><path d="M8.8 11.2 Q9.5 9.3 11.5 9.1 Q13.5 9.1 14.4 10.3 Q14.3 13.6 15.2 15.2 Q16.8 16.8 19.5 16.7 Q22 16.6 23.8 15.6 Q23 17.6 21.8 18.4 Q19.5 19.3 16.2 18.8 Q13 17.9 10.8 15.8 Q8.6 13.8 8.8 11.2 Z" fill="#fff"/></g></svg>
<div class="t" style="left:779px;top:540.76px;font-size:18px;line-height:22px;font-weight:normal;color:#111;;letter-spacing:-0.320px">efff_BE0501686770_ 2025 VK 202500003.xml</div>
<div class="t" style="left:1190px;top:540.76px;font-size:18px;line-height:22px;font-weight:normal;color:#5f5f5f;;letter-spacing:0.139px">5/05/2025 12:16</div>
<div class="t" style="left:1433px;top:540.76px;font-size:18px;line-height:22px;font-weight:normal;color:#5f5f5f;;letter-spacing:-0.350px">Microsoft E</div>
</div><div class="b" style="left:315px;top:583px;width:1232px;height:113px;background:#f0f0f0"></div>
<div class="t" style="left:501px;top:615.76px;font-size:18px;line-height:22px;font-weight:normal;color:#111;;letter-spacing:-0.463px">File name:</div>
<div class="b" style="left:587px;top:609px;width:634px;height:34px;border:1px solid #7a7a7a;border-radius:3px;background:#fff"></div>
<svg class="b" style="left:1199px;top:619px" width="18" height="14"><path d="M3 4 L8.5 9.5 L14 4" fill="none" stroke="#555" stroke-width="1.3"/></svg>
<div class="b" style="left:1239px;top:609px;width:282px;height:33px;border:1px solid #d5d5d5;border-radius:3px;background:#fdfdfd"></div>
<div class="t" style="left:1243px;top:615.76px;font-size:18px;line-height:22px;font-weight:normal;color:#111;;letter-spacing:-0.208px">XML-bestanden (*.xml)</div>
<svg class="b" style="left:1499px;top:619px" width="18" height="14"><path d="M3 4 L8.5 9.5 L14 4" fill="none" stroke="#555" stroke-width="1.3"/></svg>
<div class="b" style="left:1240px;top:652px;width:130px;height:37px;border:1px solid #d0d0d0;border-radius:4px;background:#fdfdfd"></div>
<div class="t" style="left:1283px;top:660.76px;font-size:18px;line-height:22px;font-weight:normal;color:#111;;letter-spacing:-0.571px">Open</div>
<div class="b" style="left:1390px;top:652px;width:130px;height:37px;border:1px solid #d0d0d0;border-radius:4px;background:#fdfdfd"></div>
<div class="t" style="left:1429px;top:660.76px;font-size:18px;line-height:22px;font-weight:normal;color:#111;;letter-spacing:-1.036px">Cancel</div>
</body></html>
